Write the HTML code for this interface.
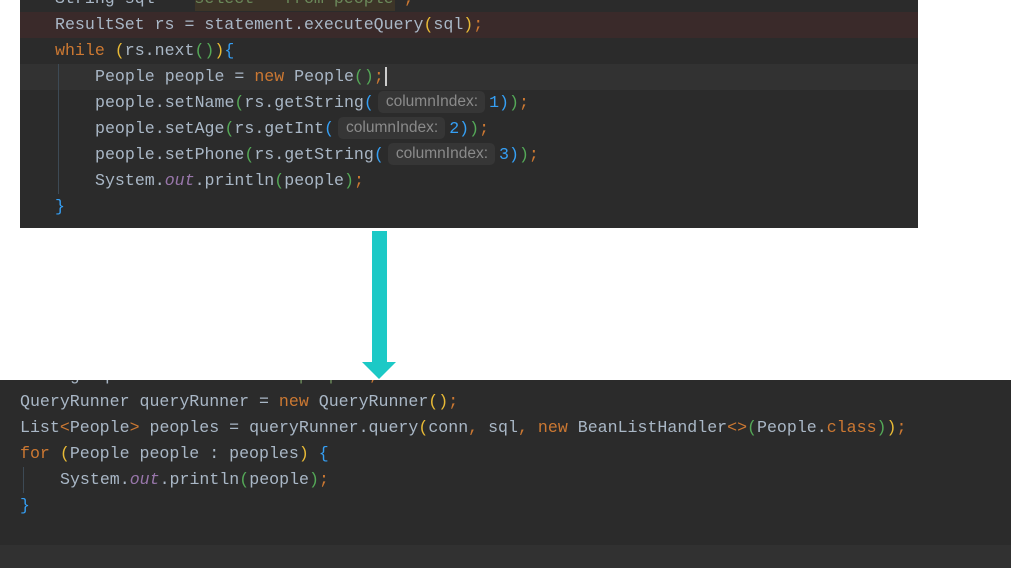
<!DOCTYPE html>
<html><head><meta charset="utf-8"><style>
body{margin:0;width:1011px;height:568px;background:#fff;position:relative;overflow:hidden;font-family:"Liberation Mono",monospace;font-size:16.6px;color:#a9b7c6}
.p{position:absolute;background:#2b2b2b;overflow:hidden}
.l{position:absolute;white-space:pre;line-height:26px;height:26px}
.k{color:#cc7832}.s{color:#6a8759}.o{color:#9876aa;font-style:italic}
.y{color:#e8ba36}.g{color:#54a857}.b{color:#359ff4}
.h{display:inline-block;background:#363636;color:#8a8a8a;font-family:"Liberation Sans",sans-serif;font-size:15.5px;line-height:22px;padding:0 7px 0 8px;border-radius:5px;margin:0 4px 0 4px;vertical-align:1px}
</style></head><body>
<div class="p" style="left:20px;top:0;width:898px;height:228px">
<div style="position:absolute;left:0;top:12px;width:898px;height:26px;background:#3a2a2a"></div>
<div style="position:absolute;left:0;top:64px;width:898px;height:26px;background:#323232"></div>
<div style="position:absolute;left:38px;top:64px;width:1px;height:130px;background:#3d4a55"></div>
<div style="position:absolute;left:175px;top:0;width:200px;height:11px;background:#3d3528"></div>
<div class="l" style="left:35px;top:-14px">String sql = <span class="s">"select * from people"</span><span class="k">;</span></div>
<div class="l" style="left:35px;top:12px">ResultSet rs = statement.executeQuery<span class="y">(</span>sql<span class="y">)</span><span class="k">;</span></div>
<div class="l" style="left:35px;top:38px"><span class="k">while</span> <span class="y">(</span>rs.next<span class="g">()</span><span class="y">)</span><span class="b">{</span></div>
<div class="l" style="left:75px;top:64px">People people = <span class="k">new</span> People<span class="g">()</span><span class="k">;</span><span style="border-left:2px solid #ccc;margin-left:1px"></span></div>
<div class="l" style="left:75px;top:90px">people.setName<span class="g">(</span>rs.getString<span class="b">(</span><span class="h">columnIndex:</span><span class="b">1)</span><span class="g">)</span><span class="k">;</span></div>
<div class="l" style="left:75px;top:116px">people.setAge<span class="g">(</span>rs.getInt<span class="b">(</span><span class="h">columnIndex:</span><span class="b">2)</span><span class="g">)</span><span class="k">;</span></div>
<div class="l" style="left:75px;top:142px">people.setPhone<span class="g">(</span>rs.getString<span class="b">(</span><span class="h">columnIndex:</span><span class="b">3)</span><span class="g">)</span><span class="k">;</span></div>
<div class="l" style="left:75px;top:168px">System.<span class="o">out</span>.println<span class="g">(</span>people<span class="g">)</span><span class="k">;</span></div>
<div class="l" style="left:35px;top:194px"><span class="b">}</span></div>
</div>
<div style="position:absolute;left:372px;top:231px;width:15px;height:132px;background:#1cc9c6"></div>
<div style="position:absolute;left:362px;top:362px;width:0;height:0;border-left:17.5px solid transparent;border-right:17.5px solid transparent;border-top:17px solid #1cc9c6"></div>
<div class="p" style="left:0;top:380px;width:1011px;height:188px">
<div style="position:absolute;left:0;top:165px;width:1011px;height:23px;background:#313131"></div>
<div style="position:absolute;left:23px;top:87px;width:1px;height:26px;background:#3d4a55"></div>
<div class="l" style="left:20px;top:-17px">String sql = <span class="s">"select * from people"</span><span class="k">;</span></div>
<div class="l" style="left:20px;top:9px">QueryRunner queryRunner = <span class="k">new</span> QueryRunner<span class="y">()</span><span class="k">;</span></div>
<div class="l" style="left:20px;top:35px">List<span class="k">&lt;</span>People<span class="k">&gt;</span> peoples = queryRunner.query<span class="y">(</span>conn<span class="k">,</span> sql<span class="k">,</span> <span class="k">new</span> BeanListHandler<span class="k">&lt;&gt;</span><span class="g">(</span>People.<span class="k">class</span><span class="g">)</span><span class="y">)</span><span class="k">;</span></div>
<div class="l" style="left:20px;top:61px"><span class="k">for</span> <span class="y">(</span>People people : peoples<span class="y">)</span> <span class="b">{</span></div>
<div class="l" style="left:60px;top:87px">System.<span class="o">out</span>.println<span class="g">(</span>people<span class="g">)</span><span class="k">;</span></div>
<div class="l" style="left:20px;top:113px"><span class="b">}</span></div>
</div>
</body></html>
